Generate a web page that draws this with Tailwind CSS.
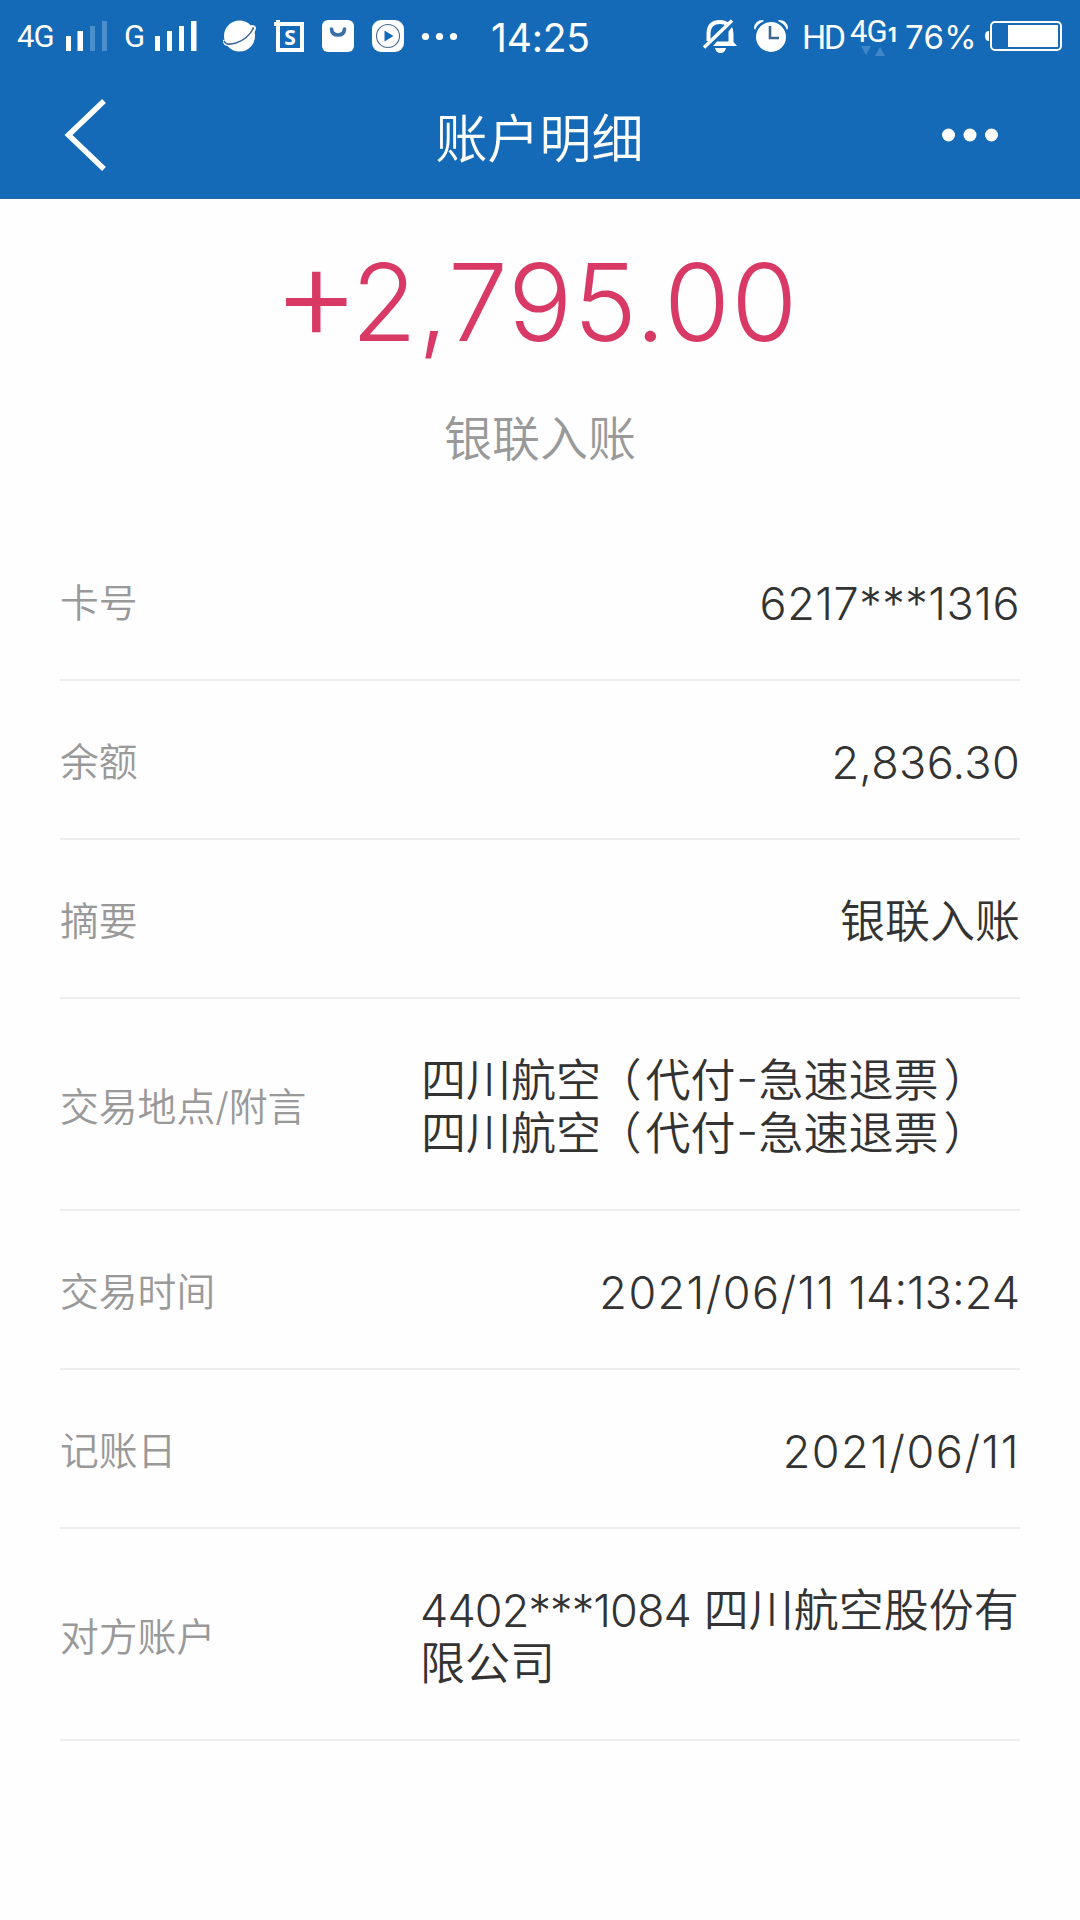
<!DOCTYPE html>
<html lang="zh-CN">
<head>
<meta charset="utf-8">
<title>账户明细</title>
<script src="https://cdn.jsdelivr.net/npm/@tailwindcss/browser@4"></script>
</head>
<body class="bg-[#fefefe] font-['Inter','Noto_Sans_CJK_SC',sans-serif] font-[350] text-[#333333]">
<div class="flex h-[1920px] w-[1080px] flex-col overflow-hidden whitespace-nowrap">
  <header class="flex h-[199px] shrink-0 flex-col border-b border-[#2c65a0] bg-[#146ab6] text-white">
    <!-- status bar -->
    <div class="flex h-[72px] items-center font-normal">
      <span class="ml-[17px] w-[48px] pt-[2px] font-['Roboto'] text-[31px] tracking-[-1px]">4G</span>
      <svg class="h-[72px] w-[43px]" viewBox="65 0 43 72" fill="#fff"><path d="M66 36h5v15h-5zM77.500 31h5.500v20h-5.500z"/><path fill="#4a8fcb" d="M90 26h5v25h-5zM102 21h5v30h-5z"/></svg>
      <span class="ml-[16px] w-[30px] pt-[2px] font-['Roboto'] text-[31px]">G</span>
      <svg class="h-[72px] w-[43px]" viewBox="155 0 43 72" fill="#fff"><path d="M156 36h5v15h-5zM168 31h5v20h-5zM180 26h5v25h-5zM192 21h5.500v30h-5.500z"/></svg>
      <svg class="ml-[24px] h-[72px] w-[238px]" viewBox="221 0 238 72" fill="#fff">
        <circle cx="239.500" cy="36" r="15.500"/><path d="M224 40Q223 45 229 45Q239 45 248 38Q255 32 255 28Q255 26 251 26" fill="none" stroke="#fff" stroke-width="2"/><path d="M224 41Q226 46 236 43Q248 39 253.500 28" fill="none" stroke="#3b6794" stroke-width="1.600"/>
        <path fill-rule="evenodd" d="M276 20h4v2h24v30h-28V26h-2v-4h2zM280 26v22h20V26z"/><text x="290" y="45" text-anchor="middle" font-size="21" font-weight="700" font-family="Open Sans">S</text>
        <rect x="322" y="20" width="32" height="32" rx="6"/><path d="M331.500 29Q332 35 338 35T344.500 29" fill="none" stroke="#3b6fa5" stroke-width="3.600" stroke-linecap="round"/>
        <rect x="372" y="20" width="32" height="32" rx="9"/><circle cx="388" cy="36" r="11.500" fill="none" stroke="#48698d" stroke-width="1.100"/><path d="M384.500 30.500v11l9-5.500z" fill="#146ab6"/>
        <circle cx="425.500" cy="36.500" r="3.600"/><circle cx="439.500" cy="36.500" r="3.600"/><circle cx="453.500" cy="36.500" r="3.600"/>
      </svg>
      <time class="ml-[32px] w-[209px] pt-[4px] text-[39px] tracking-[-0.200px]">14:25</time>
      <svg class="h-[72px] w-[89px]" viewBox="700 0 89 72" fill="#fff">
        <path d="M708.500 41V33Q709 22 720 22Q725 22 728 25" fill="none" stroke="#fff" stroke-width="4"/><path d="M728.500 31.500l3.500-4.500q1.500 3 1.500 7v8l3.500 4H713l4-4.500h11.500zM715 48h11q-1 5-5.500 5t-5.500-5z"/><path d="M704 47.500L732 20.500" stroke="#fff" stroke-width="3.500"/>
        <circle cx="771" cy="37" r="15"/><path d="M754 28Q755 20 763 20l1 1q-7 3-9 9zM788 28Q787 20 779 20l-1 1q7 3 9 9z"/><path d="M770 26v12h9" fill="none" stroke="#3c6791" stroke-width="2.600"/>
      </svg>
      <span class="ml-[13px] w-[46px] pt-[2px] font-['Roboto'] text-[34px] tracking-[-2.500px]">HD</span>
      <div class="relative h-[72px] w-[57px]">
        <span class="absolute top-[12px] left-[2px] font-['Roboto'] text-[31px] leading-[40px] tracking-[-1px]">4G</span>
        <span class="absolute top-[22px] left-[40px] text-[20px] leading-[26px] font-bold">1</span>
        <svg class="absolute top-[46px] left-[12px] h-[10px] w-[26px]" viewBox="0 0 26 10" fill="#3f88c8"><path d="M1 0h10L6 9zM15 10h10L20 1z"/></svg>
      </div>
      <span class="w-[79px] pt-[3px] text-[33px] tracking-[0.300px]">76%</span>
      <svg class="h-[72px] w-[78px]" viewBox="984 0 78 72" fill="#fff"><path d="M989 31q-4 0-4 5t4 5z"/><rect x="991" y="22" width="70" height="28" rx="4" fill="none" stroke="#fff" stroke-width="2"/><path d="M1008 25h50v22h-50z"/></svg>
    </div>
    <!-- title bar -->
    <div class="flex h-[127px] items-center justify-between pr-[82px] pl-[64px]">
      <svg class="h-[72px] w-[42px]" viewBox="0 0 42 72"><path d="M40 2L4.500 36L40 70" fill="none" stroke="#fff" stroke-width="5.500"/></svg>
      <h1 class="ml-[31px] pt-[9px] text-[52px] leading-[60px]">账户明细</h1>
      <svg class="h-[14px] w-[56px]" viewBox="0 0 56 14" fill="#fff"><circle cx="6.500" cy="7" r="6.500"/><circle cx="28" cy="7" r="6.500"/><circle cx="49.500" cy="7" r="6.500"/></svg>
    </div>
  </header>
  <section class="flex h-[323px] shrink-0 flex-col items-center">
    <p class="mt-[28px] flex h-[130px] items-baseline pr-[9px] text-[107px] leading-[130px] font-[340] tracking-[1.200px] text-[#d93965]"><span class="relative -top-px -mr-[10px] text-[134px] font-light">+</span><span>2,795.00</span></p>
    <p class="mt-[52px] text-[48px] leading-[60px] text-[#999999]">银联入账</p>
  </section>
  <dl class="mx-[60px] flex flex-col text-[45px] leading-[53px]">
    <div class="flex h-[159px] items-center justify-between border-b-2 border-[#eeeeee]"><dt class="pt-[4px] text-[38.800px] text-[#999999]">卡号</dt><dd class="pt-[5px] tracking-[0.500px]">6217***1316</dd></div>
    <div class="flex h-[159px] items-center justify-between border-b-2 border-[#eeeeee]"><dt class="pt-[4px] text-[38.800px] text-[#999999]">余额</dt><dd class="pt-[5px] tracking-[0.300px]">2,836.30</dd></div>
    <div class="flex h-[159px] items-center justify-between border-b-2 border-[#eeeeee]"><dt class="pt-[4px] text-[38.800px] text-[#999999]">摘要</dt><dd class="pt-[6px]">银联入账</dd></div>
    <div class="flex h-[212px] items-center border-b-2 border-[#eeeeee]"><dt class="w-[361px] shrink-0 pt-[4px] text-[38.800px] text-[#999999]">交易地点/附言</dt><dd class="pt-[6px]">
      <p>四川航空<span class="mr-[4px] ml-[18px] [font-feature-settings:'halt']">（</span>代付<span class="inline-block w-[23px] origin-left scale-x-110 -translate-y-[3px]">-</span>急速退票<span class="ml-[5px] [font-feature-settings:'halt']">）</span></p>
      <p>四川航空<span class="mr-[4px] ml-[18px] [font-feature-settings:'halt']">（</span>代付<span class="inline-block w-[23px] origin-left scale-x-110 -translate-y-[3px]">-</span>急速退票<span class="ml-[5px] [font-feature-settings:'halt']">）</span></p>
    </dd></div>
    <div class="flex h-[159px] items-center justify-between border-b-2 border-[#eeeeee]"><dt class="pt-[4px] text-[38.800px] text-[#999999]">交易时间</dt><dd class="pt-[5px]"><span class="tracking-[1.400px]">2021/06/11</span> 14:13:24</dd></div>
    <div class="flex h-[159px] items-center justify-between border-b-2 border-[#eeeeee]"><dt class="pt-[4px] text-[38.800px] text-[#999999]">记账日</dt><dd class="pt-[5px] tracking-[1.500px]">2021/06/11</dd></div>
    <div class="flex h-[212px] items-center border-b-2 border-[#eeeeee]"><dt class="w-[360px] shrink-0 pt-[4px] text-[38.800px] text-[#999999]">对方账户</dt><dd class="pt-[6px]"><span class="tracking-[-0.900px]">4402***1084</span> 四川航空股份有<br>限公司</dd></div>
  </dl>
</div>
</body>
</html>
